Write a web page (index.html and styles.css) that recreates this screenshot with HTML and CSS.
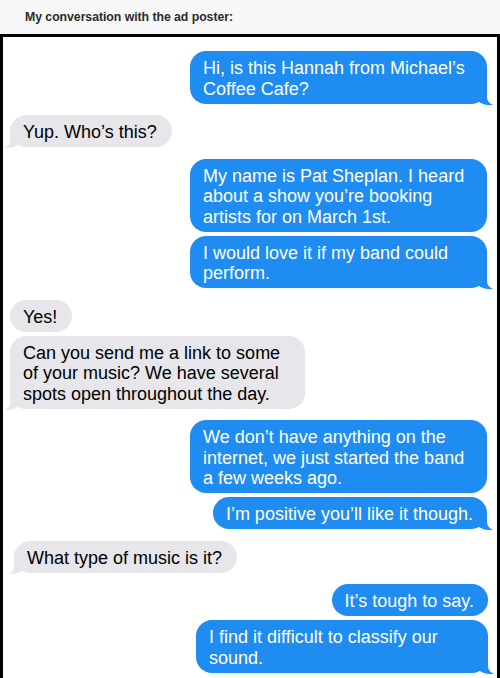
FILE: index.html
```html
<!DOCTYPE html>
<html lang="en">
<head>
<meta charset="utf-8">
<title>My conversation with the ad poster</title>
<link rel="stylesheet" href="styles.css">
</head>
<body>
<header class="caption">My conversation with the ad poster:</header>
<main class="frame">
  <div class="bubble me wide tail">Hi, is this Hannah from Michael’s<br>Coffee Cafe?</div>
  <div class="bubble them tail">Yup. Who’s this?</div>
  <div class="bubble me wide">My name is Pat Sheplan. I heard<br>about a show you’re booking<br>artists for on March 1st.</div>
  <div class="bubble me wide tail cont">I would love it if my band could<br>perform.</div>
  <div class="bubble them">Yes!</div>
  <div class="bubble them wide tail cont">Can you send me a link to some<br>of your music? We have several<br>spots open throughout the day.</div>
  <div class="bubble me wide">We don’t have anything on the<br>internet, we just started the band<br>a few weeks ago.</div>
  <div class="bubble me tail cont">I’m positive you’ll like it though.</div>
  <div class="bubble them tail shift">What type of music is it?</div>
  <div class="bubble me edge">It’s tough to say.</div>
  <div class="bubble me wide tail cont edge narrow">I find it difficult to classify our<br>sound.</div>
</main>
</body>
</html>
```

FILE: styles.css
```css
html, body {
  margin: 0;
  padding: 0;
  background: #ffffff;
}

body {
  width: 500px;
  height: 678px;
  overflow: hidden;
  font-family: "Liberation Sans", Arial, Helvetica, sans-serif;
}

.caption {
  height: 34px;
  box-sizing: border-box;
  padding: 0 0 0 25px;
  display: flex;
  align-items: center;
  background: #f7f7f7;
  color: #2b2b2b;
  font-weight: bold;
  font-size: 12.3px;
  letter-spacing: -0.05px;
}

.frame {
  display: flex;
  flex-direction: column;
  border: 3px solid #000;
  border-bottom: none;
  background: #fff;
  padding: 14px 10px 2px 7px;
  height: 644px;
  box-sizing: border-box;
}

.bubble {
  position: relative;
  box-sizing: border-box;
  max-width: 297px;
  padding: 7px 14px 4.5px 13px;
  border-radius: 16px;
  font-size: 18px;
  line-height: 20.5px;
  margin-top: 11.5px;
}

.bubble:first-child {
  margin-top: 0;
}

.bubble.cont {
  margin-top: 4px;
}

.wide {
  width: 297px;
}

.them.wide {
  width: 295px;
}

.narrow {
  width: 292px;
}

.me {
  align-self: flex-end;
  background: #1f8cf1;
  color: #ffffff;
}

.me.edge {
  margin-right: -1px;
}

.them {
  align-self: flex-start;
  background: #e6e6eb;
  color: #000000;
  padding-left: 13px;
  padding-right: 15px;
}

.them.shift {
  margin-left: 4px;
}

.tail::before,
.tail::after {
  content: "";
  position: absolute;
  bottom: 0;
  height: 17px;
}

.me.tail::before {
  right: -6px;
  width: 20px;
  background: #1f8cf1;
  border-bottom-left-radius: 16px 14px;
  transform: translateY(1px);
}

.me.tail::after {
  right: -9px;
  width: 9px;
  background: #ffffff;
  border-bottom-left-radius: 8px;
  transform: translateY(1px);
}

.them.tail::before {
  left: -6px;
  width: 20px;
  background: #e6e6eb;
  border-bottom-right-radius: 16px 14px;
  transform: translateY(1px);
}

.them.tail::after {
  left: -7px;
  width: 7px;
  background: #ffffff;
  border-bottom-right-radius: 7px;
  transform: translateY(1px);
}
```
